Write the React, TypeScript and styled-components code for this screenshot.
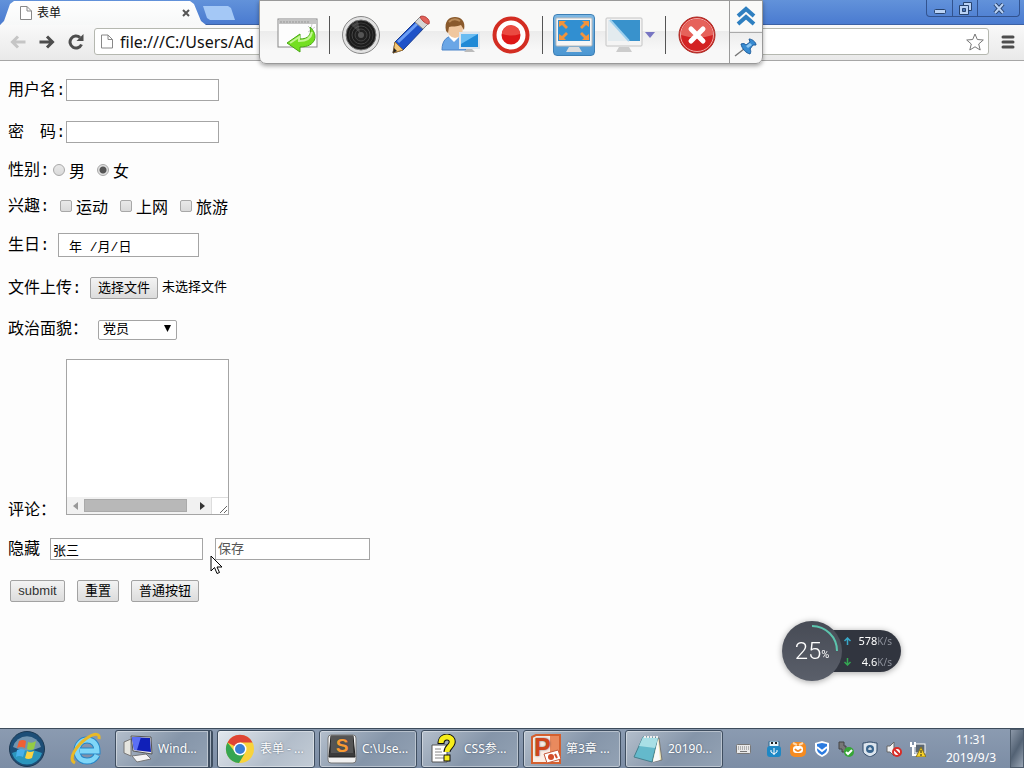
import React, { useRef } from "react";
import styled, { createGlobalStyle } from "styled-components";

const cjk = `"Noto Sans CJK SC", sans-serif`;
const uiFont = `"Noto Sans", ${cjk}`;
const pageFont = `"Liberation Mono", ${cjk}`;

const GlobalStyle = createGlobalStyle`
  * { box-sizing: border-box; }
  body { margin: 0; background: #fdfdfd; font-family: ${uiFont}; }
  button, input, select, textarea { font: inherit; color: inherit; margin: 0; border-radius: 0; outline: none; }
  svg { display: block; flex: none; }
`;

const Screen = styled.div`
  position: relative;
  display: flex;
  flex-direction: column;
  min-height: 100vh;
  overflow: hidden;
`;

/* ---------- browser chrome ---------- */

const TitleBar = styled.header`
  display: flex;
  height: 25px;
  background: linear-gradient(#6292da, #4a7bd0);
  border-bottom: 1px solid #3c61a4;
`;

const Tab = styled.div`
  display: flex;
  align-items: center;
  width: 206px;
  height: 25px;
  padding: 1px 16px 0 20px;
  gap: 5px;
  font-size: 12px;
  line-height: 18px;
  color: #111;
  background: linear-gradient(#fff, #f7f8f8);
  clip-path: polygon(0 100%, 4px 84%, 10px 16%, 14px 4%, 190px 4%, 194px 16%, 201px 84%, 206px 100%);
`;

const TabTitle = styled.span`
  flex: 1;
`;

const BareButton = styled.button`
  display: flex;
  align-items: center;
  justify-content: center;
  padding: 0;
  border: 0;
  background: none;
`;

const NewTab = styled(BareButton)`
  width: 32px;
  height: 14px;
  margin: 6px 0 0 -3px;
  background: #a4c8f6;
  clip-path: polygon(0 0, 25px 0, 28px 2px, 100% 100%, 7px 100%, 4px 12px);
`;

const WindowButtons = styled.div`
  display: flex;
  height: 17px;
  margin: 0 4px 0 auto;
  border: 1px solid #32538f;
  border-top: 0;
  border-radius: 0 0 4px 4px;
`;

const WindowButton = styled(BareButton)<{ $wide?: boolean }>`
  width: ${(p) => (p.$wide ? 42 : 25)}px;
  &:not(:first-child) { border-left: 1px solid #32538f; }
`;

const NavBar = styled.nav`
  display: flex;
  align-items: center;
  height: 36px;
  padding: 0 8px 2px 3px;
  background: linear-gradient(#f9f9f9, #e9e9e9);
  border-bottom: 1px solid #a6a6a6;
`;

const NavButton = styled(BareButton)`
  width: 29px;
  height: 28px;
`;

const AddressBox = styled.div`
  display: flex;
  flex: 1;
  align-items: center;
  height: 27px;
  margin-left: 4px;
  padding: 0 4px 0 6px;
  gap: 7px;
  background: #fff;
  border: 1px solid #b5b8b0;
  border-radius: 3px;
`;

const AddressInput = styled.input`
  flex: 1;
  min-width: 0;
  padding: 0;
  border: 0;
  background: none;
  font-size: 16px;
  line-height: 24px;
  color: #111;
`;

const MenuButton = styled(BareButton)`
  width: 16px;
  height: 28px;
  margin-left: 11px;
`;

/* ---------- page form ---------- */

const Page = styled.main`
  position: relative;
  flex: 1;
  padding: 18px 8px;
  background: #fdfdfd;
  font-family: ${pageFont};
  font-size: 16px;
  line-height: 20px;
  color: #000;
`;

const Form = styled.form`
  display: flex;
  flex-direction: column;
`;

const Row = styled.div<{ $gap?: number; $height?: number }>`
  display: flex;
  align-items: center;
  height: ${(p) => p.$height ?? 22}px;
  &:not(:first-child) { margin-top: ${(p) => p.$gap ?? 20}px; }
`;

const CommentRow = styled(Row)`
  align-items: flex-end;
  height: auto;
  & > label { margin-bottom: -6px; }
`;

const Label = styled.label<{ $width: number }>`
  width: ${(p) => p.$width}px;
  padding-top: 2px;
  white-space: pre;
`;

const Field = styled.input<{ $width?: number }>`
  width: ${(p) => p.$width ?? 153}px;
  height: 22px;
  padding: 0 2px;
  border: 1px solid #a5a5a5;
  background: #fff;
  font-size: 13px;
  &::placeholder { color: #555; opacity: 1; }
`;

const HiddenNameField = styled(Field)`
  margin-right: 12px;
  font-family: ${cjk};
`;

const DateField = styled(Field)`
  height: 24px;
  padding: 0 10px;
`;

const Choice = styled.label`
  display: flex;
  align-items: center;
  gap: 4px;
  margin-right: 12px;
  font-family: ${cjk};
`;

const Radio = styled.input.attrs({ type: "radio" })`
  appearance: none;
  width: 12px;
  height: 12px;
  border: 1px solid #a8a8a8;
  border-radius: 50%;
  background: linear-gradient(#e8e8e8, #dadada);
  &:checked { background: radial-gradient(circle, #555 0 3px, #e0e0e0 4px); }
`;

const Checkbox = styled.input.attrs({ type: "checkbox" })`
  appearance: none;
  width: 12px;
  height: 12px;
  border: 1px solid #a8a8a8;
  border-radius: 2px;
  background: linear-gradient(#e9e9e9, #dadada);
`;

const PushButton = styled.button<{ $width: number }>`
  width: ${(p) => p.$width}px;
  height: 22px;
  padding: 0;
  border: 1px solid #a2a2a2;
  border-radius: 2px;
  background: linear-gradient(#f3f3f3, #dcdcdc);
  font-family: "Liberation Sans", ${cjk};
  font-size: 13px;
  line-height: 20px;
  white-space: nowrap;
`;

const SubmitButton = styled(PushButton)`
  color: #333;
`;

const FileNote = styled.span`
  margin-left: 4px;
  font-size: 13px;
`;

const SelectBox = styled.div`
  position: relative;
  width: 79px;
  height: 20px;
`;

const Select = styled.select`
  appearance: none;
  width: 100%;
  height: 100%;
  padding: 0 4px;
  border: 1px solid #a5a5a5;
  border-radius: 2px;
  background: #fff;
  font-size: 13px;
  line-height: 18px;
`;

const SelectArrow = styled.svg`
  position: absolute;
  right: 6px;
  top: 6px;
  pointer-events: none;
`;

const CommentBox = styled.div`
  display: flex;
  flex-direction: column;
  width: 163px;
  height: 156px;
  border: 1px solid #a5a5a5;
  background: #fff;
`;

const Comment = styled.textarea`
  flex: 1;
  width: 100%;
  padding: 2px;
  border: 0;
  background: none;
  resize: none;
`;

const ScrollTrack = styled.div`
  display: flex;
  align-items: center;
  height: 17px;
  background: #f1f1f1;
`;

const ScrollArrow = styled(BareButton)`
  width: 17px;
  height: 17px;
`;

const ScrollLane = styled.div`
  flex: 1;
`;

const ScrollThumb = styled.div`
  width: 94%;
  height: 13px;
  background: #b8b8b8;
  border: 1px solid #aaa;
`;

const Grip = styled.div`
  display: flex;
  align-items: flex-end;
  justify-content: flex-end;
  width: 17px;
  height: 17px;
  border: 1px solid #ddd;
  border-width: 1px 0 0 1px;
  background: #fff;
`;

const Buttons = styled(Row)`
  gap: 12px;
  padding-left: 2px;
`;

const Cursor = styled.svg`
  position: absolute;
  left: 210px;
  top: 494px;
`;

/* ---------- floating recorder bar ---------- */

const Recorder = styled.div`
  position: absolute;
  left: 50%;
  top: 0;
  display: flex;
  width: 504px;
  height: 64px;
  margin-left: -253px;
  border: 1px solid #999;
  border-radius: 0 0 7px 7px;
  background: linear-gradient(#f9f9f8 0 48%, #ececec 49%, #f8f8f8 80%);
  box-shadow: 0 2px 4px rgba(0, 0, 0, 0.35);
`;

const RecorderTools = styled.div`
  display: flex;
  flex: 1;
  align-items: center;
  padding: 6px 0 0 17px;
  gap: 8px;
`;

const ToolButton = styled(BareButton)<{ $active?: boolean }>`
  width: 42px;
  height: 42px;
  border-radius: 4px;
  ${(p) => p.$active && "border: 1px solid #3c7fb5; background: linear-gradient(#7db8e4, #4c97d2);"}
`;

const ToolDivider = styled.div`
  width: 1px;
  height: 38px;
  margin: 0 2px;
  background: #555;
`;

const DropButton = styled(BareButton)`
  width: 10px;
  height: 42px;
  margin-left: -8px;
`;

const RecorderSide = styled.div`
  display: flex;
  flex-direction: column;
  width: 33px;
  border-left: 1px solid #9a9a9a;
`;

const SideButton = styled(BareButton)`
  flex: 1;
  &:not(:first-child) { border-top: 1px solid #aaa; }
`;

/* ---------- network speed widget ---------- */

const Speed = styled.div`
  position: absolute;
  right: 123px;
  bottom: 87px;
  display: flex;
  align-items: center;
  color: #fff;
  filter: drop-shadow(0 1px 3px rgba(0, 0, 0, 0.35));
`;

const Dial = styled.div`
  position: relative;
  z-index: 1;
  display: flex;
  align-items: center;
  justify-content: center;
  width: 60px;
  height: 60px;
  border-radius: 50%;
  background: linear-gradient(#474b55, #5a5f6a);
  font-family: Roboto, sans-serif;
  font-weight: 300;
  font-size: 24px;
  line-height: 28px;
`;

const Percent = styled.span`
  padding-top: 8px;
  font-size: 11px;
  font-weight: 400;
  line-height: 12px;
`;

const Arc = styled.svg`
  position: absolute;
  inset: 0;
`;

const Rates = styled.div`
  display: grid;
  grid-template-columns: 8px auto;
  align-items: center;
  gap: 0 6px;
  width: 88px;
  height: 42px;
  margin-left: -29px;
  padding: 1px 9px 0 31px;
  border-radius: 0 21px 21px 0;
  background: #31353f;
  font-size: 11px;
  line-height: 20px;
  text-align: right;
  white-space: nowrap;
`;

const Unit = styled.span`
  font-size: 10px;
  color: #8c909a;
`;

/* ---------- taskbar ---------- */

const TaskBar = styled.footer`
  display: flex;
  align-items: center;
  height: 40px;
  border-top: 1px solid #3d4c5c;
  background: linear-gradient(#8b9bb1, #7c8da5);
  color: #fff;
  font-size: 12px;
  line-height: 18px;
`;

const Launchers = styled.div`
  display: flex;
  align-items: center;
  width: 115px;
  padding-left: 8px;
  gap: 24px;
`;

const Tasks = styled.div`
  display: flex;
  flex: 1;
  gap: 4px;
`;

const Task = styled.button<{ $active?: boolean; $stacked?: boolean }>`
  display: flex;
  align-items: center;
  width: 98px;
  height: 38px;
  padding: 0 0 0 7px;
  gap: 5px;
  border: 1px solid #3f4e60;
  border-radius: 3px;
  background: ${(p) =>
    p.$active ? "linear-gradient(135deg, #e3e8ee, #b2bdca 60%, #c3ccd6)" : "linear-gradient(135deg, #b4bfcc, #8595a9 55%, #93a2b4)"};
  box-shadow: inset 0 0 0 1px rgba(255, 255, 255, 0.4);
  ${(p) => p.$stacked && "border-right: 5px double #3f4e60;"}
  white-space: nowrap;
  text-shadow: 0 0 2px rgba(40, 55, 75, 0.7);
`;

const Tray = styled.div`
  display: flex;
  align-items: center;
  gap: 8px;
`;

const KeyboardSlot = styled.div`
  margin-right: 7px;
`;

const Clock = styled.time`
  width: 84px;
  padding-left: 6px;
  text-align: center;
`;

const ShowDesktop = styled.button`
  width: 14px;
  height: 39px;
  padding: 0;
  border: 1px solid #4d5b6b;
  background: linear-gradient(120deg, #8c98a8, #536274 50%, #9aa6b5);
`;

/* ---------- drawings ---------- */

const PageIcon = ({ size = 14 }: { size?: number }) => (
  <svg width={12} height={size} viewBox="0 0 12 14" fill="#fff" stroke="#888">
    <path d="M.5.5H7L11.5 5v8.5H.5zM7 .5V5h4.5" />
  </svg>
);

const Arrow = ({ color, flip }: { color: string; flip?: boolean }) => (
  <svg width="16" height="14" viewBox="0 0 16 14" fill="none" stroke={color} strokeWidth="3">
    {flip ? <path d="M15.500 7H2.500M8 1.500L2.500 7 8 12.500" /> : <path d="M.5 7h13M8 1.500L13.500 7 8 12.500" />}
  </svg>
);

const CaptureIcon = () => (
  <svg width="42" height="38" viewBox="0 0 42 38">
    <rect x="1" y="3" width="39" height="28" fill="#fdfdfd" stroke="#888" />
    <rect x="2" y="4" width="37" height="4" fill="#c4c4c4" />
    <path d="M3 6h30" stroke="#999" strokeDasharray="2 1" />
    <path d="M31 10l3 3M35 8l-2 8M38 11l-7 5" stroke="#ccc" />
    <path d="M10 27l13-9v5c8 0 12-4 10-12 9 8 6 20-10 20v5z" fill="#74df22" stroke="#49a815" />
    <path d="M13 27l9-6v4c8 0 12-3 13-9" fill="none" stroke="#c4f694" strokeWidth="2" />
  </svg>
);

const LensIcon = () => (
  <svg width="40" height="40" viewBox="0 0 40 40">
    <circle cx="20" cy="20" r="18.500" fill="#e2e2e2" stroke="#888" />
    <circle cx="20" cy="20" r="15" fill="#1c1c1c" stroke="#777" />
    <circle cx="20" cy="20" r="12" fill="none" stroke="#383838" />
    <circle cx="20" cy="20" r="9" fill="none" stroke="#454545" />
    <circle cx="20" cy="20" r="6" fill="#222" stroke="#444" />
    <circle cx="20" cy="20" r="3" fill="#555" />
    <path d="M10 10l9 8-2-12z" fill="#777" opacity=".4" />
  </svg>
);

const PencilIcon = () => (
  <svg width="40" height="40" viewBox="0 0 40 40">
    <path d="M2 38l2-11L26 5l8 7-22 23z" fill="#1f52c8" stroke="#173b91" />
    <path d="M2 38l2-11 8 8z" fill="#f4c879" stroke="#a8772d" />
    <path d="M2 38l1-5 3 3z" fill="#222" />
    <path d="M7 27L28 7" stroke="#6b9df4" strokeWidth="3" />
    <path d="M24 7l6-6 8 7-6 6z" fill="#d5d5d5" stroke="#888" />
    <path d="M29 2c3-3 11 2 9 7-3 0-7-3-9-7z" fill="#e2615a" stroke="#b8443f" />
  </svg>
);

const UserIcon = () => (
  <svg width="40" height="38" viewBox="0 0 40 38">
    <path d="M1 34c0-10 5-14 12-14s12 4 12 14z" fill="#6aa6e6" stroke="#4a83c8" />
    <path d="M8 21l5 5 5-5-1-4H9z" fill="#fff" />
    <ellipse cx="14" cy="12" rx="8" ry="10" fill="#f0c79e" />
    <path d="M5 15C3 5 8 1 14 1s11 4 9 13l-3-5c-4 2-9 1-12 2l-1 6z" fill="#8a5a2c" />
    <path d="M8 6q5-5 11-1" fill="none" stroke="#b98a58" strokeWidth="2" />
    <rect x="19" y="17" width="19" height="15" fill="#1f89d6" stroke="#dce5ee" strokeWidth="2" />
    <path d="M20 18h17L20 28z" fill="#69bcf2" />
    <path d="M26 33h5l3 3H23z" fill="#bbb" />
  </svg>
);

const RecordIcon = () => (
  <svg width="40" height="40" viewBox="0 0 40 40">
    <circle cx="20" cy="20" r="16.500" fill="#fff" stroke="#d32d22" strokeWidth="4" />
    <circle cx="20" cy="20" r="9.500" fill="#dd1717" />
    <path d="M11 19a9 9 0 0118 0q-9 3-18 0z" fill="#ea4a41" />
  </svg>
);

const FullScreenIcon = () => (
  <svg width="40" height="40" viewBox="0 0 40 40">
    <path d="M15 32h10l3 5H12z" fill="#ddd" />
    <rect x="2" y="3" width="36" height="28" rx="1" fill="#f6f6f6" stroke="#bbb" />
    <rect x="4" y="5" width="32" height="21" fill="#318fd1" />
    <path d="M5 6h7l-2 2 4 4-2 2-4-4-3 2zM35 6h-7l2 2-4 4 2 2 4-4 3 2zM5 25h7l-2-2 4-4-2-2-4 4-3-2zM35 25h-7l2-2-4-4 2-2 4 4 3-2z" fill="#f2933b" />
  </svg>
);

const RegionIcon = () => (
  <svg width="38" height="38" viewBox="0 0 38 38">
    <path d="M14 31h10l3 5H11z" fill="#ccc" />
    <rect x="1" y="2" width="36" height="28" rx="1" fill="#f4f4f4" stroke="#c4c4c4" />
    <rect x="3" y="4" width="32" height="21" fill="#e3ebef" />
    <path d="M5 4h30v21H24z" fill="#3992cc" />
    <path d="M5 4l19 21" stroke="#9fd0ee" strokeWidth="2" />
  </svg>
);

const CloseIcon = () => (
  <svg width="40" height="40" viewBox="0 0 40 40">
    <circle cx="20" cy="20" r="18" fill="#d32222" stroke="#a82c24" />
    <path d="M4 20a16 16 0 0132 0q-16 5-32 0z" fill="#e6625a" />
    <circle cx="20" cy="20" r="16.500" fill="none" stroke="#efaaa5" />
    <path d="M14 14l12 12M26 14L14 26" stroke="#fff" strokeWidth="5" strokeLinecap="round" />
  </svg>
);

const StartIcon = () => (
  <svg width="38" height="38" viewBox="0 0 38 38">
    <circle cx="19" cy="19" r="17.500" fill="#1d4e77" stroke="#1b3852" />
    <path d="M4 23q15-7 30 0a15.500 15.500 0 01-30 0z" fill="#2c96bd" />
    <path d="M5 17a14.500 14.500 0 0128 0q-14 7-28 0z" fill="#8facc2" opacity=".75" />
    <path d="M11 11q4-2 7 0l-1 7q-4-2-8 0z" fill="#ef6034" />
    <path d="M20 12q4 2 8-1l-2 8q-4 2-7 0z" fill="#94cb45" />
    <path d="M9 20q4-2 8 0l-2 7q-4-2-7 0z" fill="#48b0ec" />
    <path d="M19 21q3 2 7 0l-2 7q-4 2-7 0z" fill="#fbd342" />
  </svg>
);

const ExplorerIcon = () => (
  <svg width="32" height="34" viewBox="0 0 32 34" fill="none">
    <path d="M27 23c-2 4-5 6-10 6C11 29 7 25 7 19S11 8 17 8s10 4 10 11H10" stroke="#2586c8" strokeWidth="7" />
    <path d="M27 23c-2 4-5 6-10 6C11 29 7 25 7 19S11 8 17 8s10 4 10 11H10" stroke="#7fd6f8" strokeWidth="5" />
    <path d="M5 31c-8-4 2-18 12-25 8-5 13-5 12 1" stroke="#e9b927" strokeWidth="3" />
  </svg>
);

const ComputerIcon = () => (
  <svg width="30" height="30" viewBox="0 0 30 30">
    <path d="M1 8l7-3v17l-7-3z" fill="#e5e5df" stroke="#777" />
    <path d="M8 2l20 1 1 17-19-3z" fill="#e8e8e8" stroke="#555" />
    <path d="M9 3l18 1 1 14-17-2z" fill="#1020b8" />
    <path d="M9 3h9l-4 13-3 0z" fill="#5b70f4" />
    <path d="M9 22l14-2 5 5-14 3z" fill="#f4f4f4" stroke="#777" />
  </svg>
);

const ChromeIcon = () => (
  <svg width="30" height="30" viewBox="0 0 30 30">
    <circle cx="15" cy="15" r="14" fill="#f8d33b" />
    <path d="M15 15L2.500 8.500A14 14 0 0127.500 8.500H15z" fill="#df4434" />
    <path d="M15 15l-5 3-7.500-9.500A14 14 0 0014 29l6-10z" fill="#36a551" />
    <circle cx="15" cy="15" r="6.500" fill="#fff" />
    <circle cx="15" cy="15" r="5" fill="#397fd5" />
  </svg>
);

const iconText = { fontFamily: "Liberation Sans", fontWeight: 700 };

const SublimeIcon = () => (
  <svg width="30" height="30" viewBox="0 0 30 30">
    <rect x="1" y="1" width="28" height="28" rx="3" fill="#f1f1f1" stroke="#777" />
    <path d="M4 2h22l2 21H2z" fill="#3b3b3b" stroke="#222" />
    <path d="M4 2h22v17H4z" fill="#555" />
    <text x="15" y="18" textAnchor="middle" fontSize="19" fill="#f79a32" {...iconText}>S</text>
  </svg>
);

const HelpIcon = () => (
  <svg width="30" height="30" viewBox="0 0 30 30">
    <path d="M3 11h15v17H3z" fill="#fff" stroke="#555" />
    <path d="M6 15h6M6 18h7M6 21h8M6 24h9" stroke="#888" />
    <path d="M12 10c0-10 13-8 11-1-1 4-5 4-5 9" fill="none" stroke="#111" strokeWidth="7" />
    <path d="M12 9c0-9 13-7 11 0-1 4-5 4-5 9" fill="none" stroke="#f7ee1b" strokeWidth="5" />
    <rect x="15" y="21" width="6" height="6" fill="#f7ee1b" stroke="#111" />
  </svg>
);

const SlidesIcon = () => (
  <svg width="30" height="30" viewBox="0 0 30 30">
    <path d="M1 3l4-2h24v28H1z" fill="#fbeee6" stroke="#d4602f" strokeWidth="2" />
    <path d="M19 2h9v15l-9 2z" fill="#e98a5e" />
    <text x="3" y="22" fontSize="25" fill="#cf451c" {...iconText}>P</text>
    <path d="M13 20l14-4 3 9-14 4z" fill="#fff" stroke="#c65c3d" />
    <circle cx="20" cy="23" r="3" fill="#d34e2a" />
    <path d="M24 20l2 4" stroke="#d34e2a" strokeWidth="2" />
  </svg>
);

const NotepadIcon = () => (
  <svg width="30" height="30" viewBox="0 0 30 30">
    <path d="M11 3l15 1 3 22-9 2z" fill="#ece4b5" stroke="#777" />
    <path d="M10 3l15 1-6 24-18-5z" fill="#64b9cb" stroke="#467f8d" />
    <path d="M10 3l15 1-3 10-16-2z" fill="#a8dfe6" />
    <path d="M25 5l-5 23 7-2z" fill="#fafafa" />
    <path d="M11 3h14" stroke="#eee" strokeWidth="2" strokeDasharray="2 1" />
  </svg>
);

const KeyboardIcon = () => (
  <svg width="15" height="10" viewBox="0 0 15 10">
    <rect x=".5" y=".5" width="14" height="9" rx="1" fill="#e9e9e9" stroke="#777" />
    <path d="M2 3h11M2 5h11" stroke="#777" strokeDasharray="1 1" />
    <path d="M4 7.500h7" stroke="#777" />
  </svg>
);

const trayDrawings: [string, React.ReactNode][] = [
  ["usb", <><rect x="3" y="0" width="10" height="6" rx="1" fill="#e5f2f8" stroke="#28658e" /><rect x="1" y="5" width="14" height="11" rx="3" fill="#1e88c5" /><path d="M5 2h2M9 2h2" stroke="#222" strokeWidth="2" /><path d="M8 7v7M5 9v2l3 2 3-2V9" stroke="#fff" fill="none" /></>],
  ["assistant", <><rect x="0" y="1" width="16" height="15" rx="5" fill="#f68b20" /><rect x="3" y="5" width="10" height="7" rx="3" fill="#fff" /><path d="M5 8q3 4 6 0" stroke="#f28a25" strokeWidth="2" fill="none" /><path d="M3 2l4 2M13 2l-4 2" stroke="#ffd9ae" strokeWidth="2" /></>],
  ["shield", <><path d="M8 0l7 2v6c0 4-3 6-7 8-4-2-7-4-7-8V2z" fill="#fff" /><path d="M8 2l5 1v5c0 3-2 4-5 6-3-2-5-3-5-6V3z" fill="#2b7be0" /><path d="M3 6l5 4 5-4" stroke="#fff" strokeWidth="2" fill="none" /></>],
  ["eject", <><path d="M1 1h5v4h2v6H4V8H1z" fill="#777" stroke="#444" /><circle cx="11" cy="11" r="5" fill="#36a636" /><path d="M8 11l2 2 4-4" stroke="#fff" strokeWidth="2" fill="none" /></>],
  ["guard", <><path d="M1 2c3 0 4-1 7-1s4 1 7 1v7c0 4-3 5-7 7-4-2-7-3-7-7z" fill="#dce5ee" stroke="#304a68" /><circle cx="8" cy="8" r="4" fill="#3a668f" /><path d="M6 8h4M8 6v3" stroke="#fff" /></>],
  ["volume", <><path d="M1 5h3l4-4v14l-4-4H1z" fill="#f4f4f4" stroke="#666" /><circle cx="11" cy="11" r="4" fill="#fff" stroke="#d92c26" strokeWidth="2" /><path d="M8 8l6 6" stroke="#d92c26" strokeWidth="2" /></>],
  ["network", <><rect x="5" y="3" width="10" height="9" fill="#5c6874" stroke="#fff" /><path d="M1 1v4h4V1M3 5v9h7" stroke="#fff" fill="none" strokeWidth="2" /><path d="M11 6l5 10H6z" fill="#f8d329" stroke="#87721b" /><path d="M11 9v3M11 13v2" stroke="#222" /></>],
];

const tasks: { name: string; icon: React.ReactNode; active?: boolean; stacked?: boolean }[] = [
  { name: "Wind...", icon: <ComputerIcon />, stacked: true },
  { name: "表单 - ...", icon: <ChromeIcon />, active: true },
  { name: "C:\\Use...", icon: <SublimeIcon /> },
  { name: "CSS参...", icon: <HelpIcon /> },
  { name: "第3章 ...", icon: <SlidesIcon /> },
  { name: "20190...", icon: <NotepadIcon /> },
];

const Browser = () => (
  <>
    <TitleBar>
      <Tab>
        <PageIcon />
        <TabTitle>表单</TabTitle>
        <BareButton aria-label="Close tab">
          <svg width="8" height="8" viewBox="0 0 8 8" stroke="#555" strokeWidth="2"><path d="M1 1l6 6M7 1L1 7" /></svg>
        </BareButton>
      </Tab>
      <NewTab aria-label="New tab" />
      <WindowButtons>
        <WindowButton aria-label="Minimize">
          <svg width="12" height="14" viewBox="0 0 12 14"><rect x=".5" y="8.500" width="11" height="4" rx="1" fill="#b9d2f5" stroke="#28446f" /></svg>
        </WindowButton>
        <WindowButton aria-label="Restore">
          <svg width="13" height="13" viewBox="0 0 13 13" stroke="#28446f">
            <path d="M4.500.5h8v8h-8z" fill="#b9d2f5" /><path d="M.5 3.500h9v9h-9z" fill="#b9d2f5" /><path d="M3.500 6.500h3v3h-3z" fill="#4b77bb" />
          </svg>
        </WindowButton>
        <WindowButton $wide aria-label="Close">
          <svg width="12" height="11" viewBox="0 0 12 11" fill="none"><path d="M2 1l8 9M10 1L2 10" stroke="#28446f" strokeWidth="4" /><path d="M2 1l8 9M10 1L2 10" stroke="#b9d2f5" strokeWidth="2" /></svg>
        </WindowButton>
      </WindowButtons>
    </TitleBar>
    <NavBar>
      <NavButton aria-label="Back"><Arrow color="#c5c5c5" flip /></NavButton>
      <NavButton aria-label="Forward"><Arrow color="#4d4d4d" /></NavButton>
      <NavButton aria-label="Reload">
        <svg width="16" height="16" viewBox="0 0 16 16" fill="none"><path d="M13.500 10.500A6 6 0 1112 3.500" stroke="#4d4d4d" strokeWidth="3" /><path d="M15.500 0v7H8.500z" fill="#4d4d4d" /></svg>
      </NavButton>
      <AddressBox>
        <PageIcon size={15} />
        <AddressInput aria-label="Address" defaultValue="file:///C:/Users/Ad" />
        <BareButton aria-label="Bookmark">
          <svg width="18" height="18" viewBox="0 0 18 18" fill="#fff" stroke="#777"><path d="M9 1l2.300 5.500 6 .5-4.600 4 1.500 6L9 13.800 3.800 17l1.500-6-4.600-4 6-.5z" strokeLinejoin="round" /></svg>
        </BareButton>
      </AddressBox>
      <MenuButton aria-label="Menu">
        <svg width="14" height="14" viewBox="0 0 14 14" stroke="#4d4d4d" strokeWidth="3" strokeLinecap="round"><path d="M2 2h10M2 7h10M2 12h10" /></svg>
      </MenuButton>
    </NavBar>
  </>
);

const SignupForm = () => {
  const file = useRef<HTMLInputElement>(null);
  return (
    <Form onSubmit={(e) => e.preventDefault()}>
      <Row><Label $width={58} htmlFor="user">用户名:</Label><Field id="user" /></Row>
      <Row><Label $width={58} htmlFor="pass">密　码:</Label><Field id="pass" type="password" /></Row>
      <Row $gap={16}>
        <Label as="span" $width={45}>性别:</Label>
        <Choice><Radio name="sex" />男</Choice>
        <Choice><Radio name="sex" defaultChecked />女</Choice>
      </Row>
      <Row $gap={14}>
        <Label as="span" $width={52}>兴趣:</Label>
        {["运动", "上网", "旅游"].map((hobby) => <Choice key={hobby}><Checkbox />{hobby}</Choice>)}
      </Row>
      <Row $gap={16} $height={24}><Label $width={50} htmlFor="birth">生日:</Label><DateField id="birth" $width={141} defaultValue="年 /月/日" /></Row>
      <Row>
        <Label $width={82} htmlFor="file">文件上传:</Label>
        <input id="file" ref={file} type="file" hidden />
        <PushButton type="button" $width={68} onClick={() => file.current?.click()}>选择文件</PushButton>
        <FileNote>未选择文件</FileNote>
      </Row>
      <Row $height={20}>
        <Label $width={90} htmlFor="status">政治面貌：</Label>
        <SelectBox>
          <Select id="status"><option>党员</option></Select>
          <SelectArrow width="7" height="7" viewBox="0 0 7 7"><path d="M0 0h7L3.500 7z" /></SelectArrow>
        </SelectBox>
      </Row>
      <CommentRow>
        <Label $width={58} htmlFor="comment">评论：</Label>
        <CommentBox>
          <Comment id="comment" />
          <ScrollTrack>
            <ScrollArrow type="button" aria-label="Scroll left"><svg width="5" height="8" viewBox="0 0 5 8"><path d="M5 0v8L0 4z" fill="#999" /></svg></ScrollArrow>
            <ScrollLane><ScrollThumb /></ScrollLane>
            <ScrollArrow type="button" aria-label="Scroll right"><svg width="5" height="8" viewBox="0 0 5 8"><path d="M0 0v8l5-4z" fill="#333" /></svg></ScrollArrow>
            <Grip><svg width="9" height="9" viewBox="0 0 9 9" stroke="#666"><path d="M1 8l7-7M5 8l3-3" /></svg></Grip>
          </ScrollTrack>
        </CommentBox>
      </CommentRow>
      <Row $gap={23}>
        <Label $width={42} htmlFor="hidden-name">隐藏</Label>
        <HiddenNameField id="hidden-name" defaultValue="张三" />
        <Field $width={155} aria-label="保存" placeholder="保存" />
      </Row>
      <Buttons>
        <SubmitButton $width={55} type="submit">submit</SubmitButton>
        <PushButton $width={42} type="reset">重置</PushButton>
        <PushButton $width={68} type="button">普通按钮</PushButton>
      </Buttons>
    </Form>
  );
};

const RecorderBar = () => (
  <Recorder>
    <RecorderTools>
      <ToolButton aria-label="Capture"><CaptureIcon /></ToolButton>
      <ToolDivider />
      <ToolButton aria-label="Camera"><LensIcon /></ToolButton>
      <ToolButton aria-label="Draw"><PencilIcon /></ToolButton>
      <ToolButton aria-label="Presenter"><UserIcon /></ToolButton>
      <ToolButton aria-label="Record"><RecordIcon /></ToolButton>
      <ToolDivider />
      <ToolButton $active aria-label="Full screen"><FullScreenIcon /></ToolButton>
      <ToolButton aria-label="Region"><RegionIcon /></ToolButton>
      <DropButton aria-label="Region options"><svg width="10" height="6" viewBox="0 0 10 6"><path d="M0 0h10L5 6z" fill="#7775c2" /></svg></DropButton>
      <ToolDivider />
      <ToolButton aria-label="Stop"><CloseIcon /></ToolButton>
    </RecorderTools>
    <RecorderSide>
      <SideButton aria-label="Collapse">
        <svg width="20" height="20" viewBox="0 0 20 20" fill="none" stroke="#2e7fc0" strokeWidth="4"><path d="M2 10l8-7 8 7M2 18l8-7 8 7" /></svg>
      </SideButton>
      <SideButton aria-label="Pin">
        <svg width="24" height="20" viewBox="0 0 24 20"><path d="M1 18l9-7" stroke="#777" strokeWidth="1.500" /><path d="M7 6c3-1 4 0 5 1l4-3-1-3c3 0 7 3 7 6l-3 0-3 4c1 2 1 3 0 5-4-1-8-5-9-10z" fill="#388bd1" stroke="#1d5c9c" /><path d="M12 8l4-3 2 2-4 3z" fill="#8fc8f2" /></svg>
      </SideButton>
    </RecorderSide>
  </Recorder>
);

const SpeedArrow = ({ down }: { down?: boolean }) => (
  <svg width="7" height="8" viewBox="0 0 7 8" fill="none" stroke={down ? "#35a853" : "#39a9c9"} strokeWidth="1.500">
    {down ? <path d="M3.500 0v7M.5 4l3 3 3-3" /> : <path d="M3.500 8V1M.5 4l3-3 3 3" />}
  </svg>
);

export default function App() {
  return (
    <Screen>
      <GlobalStyle />
      <Browser />
      <Page>
        <SignupForm />
        <Cursor width="13" height="20" viewBox="0 0 13 20"><path d="M1 1v15l3.500-3.500L7 18.500l2.500-1L7 12h5z" fill="#fff" stroke="#000" /></Cursor>
      </Page>
      <TaskBar>
        <Launchers><BareButton aria-label="Start"><StartIcon /></BareButton><BareButton aria-label="Internet Explorer"><ExplorerIcon /></BareButton></Launchers>
        <Tasks>
          {tasks.map((t) => <Task key={t.name} $active={t.active} $stacked={t.stacked}>{t.icon}{t.name}</Task>)}
        </Tasks>
        <Tray>
          <KeyboardSlot><KeyboardIcon /></KeyboardSlot>
          {trayDrawings.map(([name, art]) => <svg key={name} width="16" height="16" viewBox="0 0 16 16">{art}</svg>)}
        </Tray>
        <Clock>11:31<br />2019/9/3</Clock>
        <ShowDesktop aria-label="Show desktop" />
      </TaskBar>
      <RecorderBar />
      <Speed>
        <Dial>
          25<Percent>%</Percent>
          <Arc width="60" height="60" viewBox="0 0 60 60" fill="none"><path d="M30 5a25 25 0 0125 25" stroke="#5cc5ae" strokeWidth="2" /></Arc>
        </Dial>
        <Rates>
          <SpeedArrow /><span>578<Unit>K/s</Unit></span>
          <SpeedArrow down /><span>4.6<Unit>K/s</Unit></span>
        </Rates>
      </Speed>
    </Screen>
  );
}
